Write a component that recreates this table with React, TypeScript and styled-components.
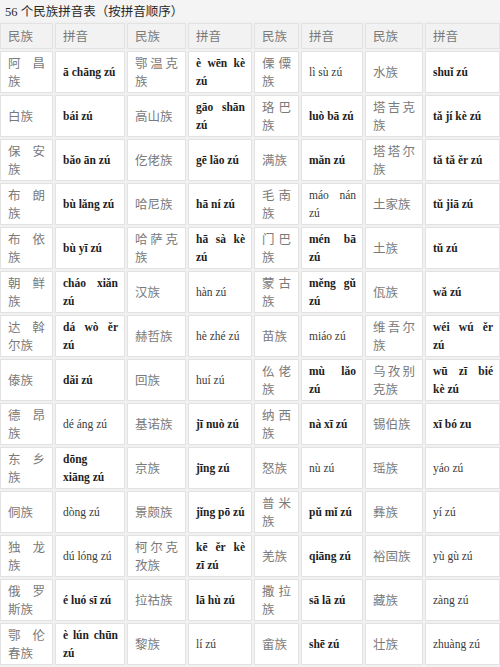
import styled, { createGlobalStyle } from 'styled-components';

const GlobalStyle = createGlobalStyle`
  html, body {
    margin: 0;
    padding: 0;
    background: #ffffff;
  }
  body {
    width: 500px;
    height: 667px;
    overflow: hidden;
    font-family: "Liberation Serif", "Noto Sans CJK SC", serif;
  }
`;

const Wrapper = styled.div`
  width: 500px;
  height: 667px;
  overflow: hidden;
  background: #f4f4f4;
`;

const Title = styled.div`
  height: 21px;
  padding-left: 5px;
  display: flex;
  align-items: center;
  font-size: 12.5px;
  color: #2a2a2a;
  font-family: "Liberation Serif", "Noto Sans CJK SC", serif;
  font-weight: 400;
`;

const Table = styled.table`
  width: 504px;
  margin-left: -2px;
  table-layout: fixed;
  border-collapse: separate;
  border-spacing: 2px;
  background: #f1f1f1;
`;

const HeadRow = styled.tr`
  height: 26px;
`;

const Row = styled.tr`
  height: 42px;
`;

const Cell = styled.td<{ $head?: boolean }>`
  border: 1px solid #e2e2e2;
  background: ${(p) => (p.$head ? '#f2f2f2' : '#ffffff')};
  padding: 0 7px;
  vertical-align: middle;
  text-align: justify;
  line-height: 18px;
  font-size: 12.5px;
  font-family: "Noto Sans CJK SC", sans-serif;
  color: #7a7a7a;
`;

const PinyinCell = styled.td<{ $light?: boolean }>`
  border: 1px solid #e2e2e2;
  background: #ffffff;
  padding: 0 6px 0 7px;
  vertical-align: middle;
  line-height: 18px;
  font-size: 11.5px;
  font-family: "Liberation Serif", "DejaVu Serif", serif;
  font-weight: ${(p) => (p.$light ? 400 : 700)};
  color: ${(p) => (p.$light ? '#3a3a3a' : '#1e1e1e')};
`;

// 换行前的那一行两端对齐
const Line = styled.div<{ $spread?: boolean }>`
  white-space: nowrap;
  text-align: ${(p) => (p.$spread ? 'justify' : 'left')};
  text-align-last: ${(p) => (p.$spread ? 'justify' : 'left')};
`;

const widths = [53, 70, 59, 64, 45, 62, 58, 75];

// [民族, 拼音（| 表示换行）, 是否细体] x 4
type Item = [string, string, boolean?];

const rows: Item[][] = [
  [['阿昌族', 'ā chāng zú'], ['鄂温克族', 'è wēn kè|zú'], ['傈僳族', 'lì sù zú', true], ['水族', 'shuǐ zú']],
  [['白族', 'bái zú'], ['高山族', 'gāo shān|zú'], ['珞巴族', 'luò bā zú'], ['塔吉克族', 'tǎ jí kè zú']],
  [['保安族', 'bǎo ān zú'], ['仡佬族', 'gē lǎo zú'], ['满族', 'mǎn zú'], ['塔塔尔族', 'tǎ tǎ ěr zú']],
  [['布朗族', 'bù lǎng zú'], ['哈尼族', 'hā ní zú'], ['毛南族', 'máo nán|zú', true], ['土家族', 'tǔ jiā zú']],
  [['布依族', 'bù yī zú'], ['哈萨克族', 'hā sà kè|zú'], ['门巴族', 'mén bā|zú'], ['土族', 'tǔ zú']],
  [['朝鲜族', 'cháo xiǎn|zú'], ['汉族', 'hàn zú', true], ['蒙古族', 'měng gǔ|zú'], ['佤族', 'wǎ zú']],
  [['达斡尔族', 'dá wò ěr|zú'], ['赫哲族', 'hè zhé zú', true], ['苗族', 'miáo zú', true], ['维吾尔族', 'wéi wú ěr|zú']],
  [['傣族', 'dǎi zú'], ['回族', 'huí zú', true], ['仫佬族', 'mù lǎo|zú'], ['乌孜别克族', 'wū zī bié|kè zú']],
  [['德昂族', 'dé áng zú', true], ['基诺族', 'jī nuò zú'], ['纳西族', 'nà xī zú'], ['锡伯族', 'xī bó zu']],
  [['东乡族', 'dōng|xiāng zú'], ['京族', 'jīng zú'], ['怒族', 'nù zú', true], ['瑶族', 'yáo zú', true]],
  [['侗族', 'dòng zú', true], ['景颇族', 'jǐng pō zú'], ['普米族', 'pǔ mǐ zú'], ['彝族', 'yí zú', true]],
  [['独龙族', 'dú lóng zú', true], ['柯尔克孜族', 'kē ěr kè|zī zú'], ['羌族', 'qiāng zú'], ['裕固族', 'yù gù zú', true]],
  [['俄罗斯族', 'é luó sī zú'], ['拉祜族', 'lā hù zú'], ['撒拉族', 'sā lā zú'], ['藏族', 'zàng zú', true]],
  [['鄂伦春族', 'è lún chūn|zú'], ['黎族', 'lí zú', true], ['畲族', 'shē zú'], ['壮族', 'zhuàng zú', true]],
];

const Pinyin = ({ text, light }: { text: string; light?: boolean }) => {
  const lines = text.split('|');
  return (
    <PinyinCell $light={light}>
      {lines.map((l, i) => (
        <Line key={i} $spread={i < lines.length - 1}>
          {l}
        </Line>
      ))}
    </PinyinCell>
  );
};

const App = (): JSX.Element => {
  return (
    <Wrapper>
      <GlobalStyle />
      <Title>56 个民族拼音表（按拼音顺序）</Title>
      <Table>
        <colgroup>
          {widths.map((w, i) => (
            <col key={i} style={{ width: `${w}px` }} />
          ))}
        </colgroup>
        <tbody>
          <HeadRow>
            {[0, 1, 2, 3].map((i) => [
              <Cell key={`m${i}`} $head>
                民族
              </Cell>,
              <Cell key={`p${i}`} $head>
                拼音
              </Cell>,
            ])}
          </HeadRow>
          {rows.map((row, r) => (
            <Row key={r}>
              {row.map(([name, py, light], c) => [
                <Cell key={`n${c}`}>{name}</Cell>,
                <Pinyin key={`p${c}`} text={py} light={light} />,
              ])}
            </Row>
          ))}
        </tbody>
      </Table>
    </Wrapper>
  );
};

export default App;
